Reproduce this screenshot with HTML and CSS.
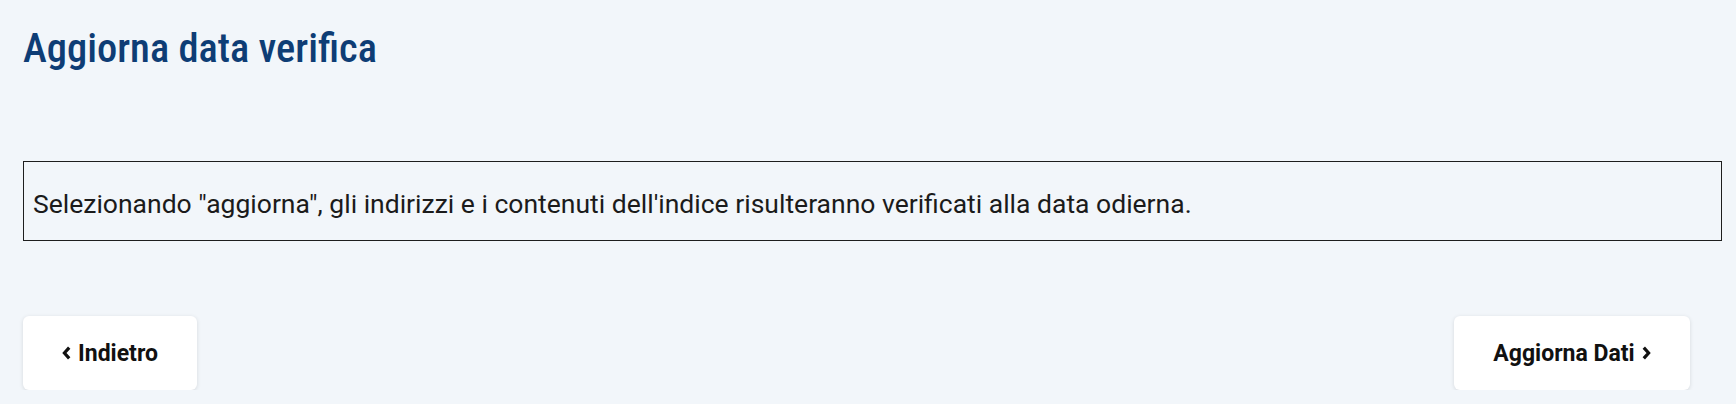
FILE: index.html
```html
<!DOCTYPE html>
<html lang="it">
<head>
<meta charset="utf-8">
<title>Aggiorna data verifica</title>
<link rel="stylesheet" href="styles.css">
</head>
<body>
<main class="page">
  <h1 class="title">Aggiorna data verifica</h1>
  <div class="notice">Selezionando "aggiorna", gli indirizzi e i contenuti dell'indice risulteranno verificati alla data odierna.</div>
  <div class="actions">
    <button class="btn btn-back" type="button">
      <svg class="chev" viewBox="0 0 9 14" width="9" height="14" aria-hidden="true"><polyline points="7.2,1.6 2.4,7 7.2,12.4" fill="none" stroke="currentColor" stroke-width="3.2" stroke-linejoin="miter" stroke-linecap="butt"/></svg>
      <span>Indietro</span>
    </button>
    <button class="btn btn-next" type="button">
      <span>Aggiorna Dati</span>
      <svg class="chev" viewBox="0 0 9 14" width="9" height="14" aria-hidden="true"><polyline points="1.8,1.6 6.6,7 1.8,12.4" fill="none" stroke="currentColor" stroke-width="3.2" stroke-linejoin="miter" stroke-linecap="butt"/></svg>
    </button>
  </div>
</main>
</body>
</html>
```
FILE: styles.css
```css
html, body {
  margin: 0;
  padding: 0;
  background: #f2f6fa;
}
body {
  font-family: Roboto, "Liberation Sans", sans-serif;
  color: #1b1b1b;
}
.page {
  padding: 24px 14px 0 23px;
}
.title {
  margin: 0;
  font-family: "Roboto Condensed", Roboto, sans-serif;
  font-weight: 500;
  font-size: 40.5px;
  line-height: 48px;
  color: #0e3d75;
  letter-spacing: 0;
}
.notice {
  margin-top: 89px;
  box-sizing: border-box;
  height: 80px;
  padding: 26px 9px 20px;
  border: 1px solid #1e1e1e;
  font-size: 26.5px;
  line-height: 32px;
  color: #1b1b1b;
}
.actions {
  margin-top: 75px;
  padding-right: 32px;
  display: flex;
  justify-content: space-between;
}
.btn {
  display: flex;
  align-items: center;
  justify-content: center;
  gap: 7px;
  height: 74px;
  box-sizing: border-box;
  padding: 0;
  border: 0;
  border-radius: 6px;
  background: #fff;
  box-shadow: 0 1px 4px rgba(0, 0, 0, 0.12);
  font-family: Roboto, "Liberation Sans", sans-serif;
  font-weight: 700;
  font-size: 23px;
  line-height: 27px;
  color: #111;
  cursor: pointer;
}
.btn-back {
  width: 174px;
}
.btn-next {
  width: 236px;
}
.chev {
  display: block;
  flex: none;
}
```
